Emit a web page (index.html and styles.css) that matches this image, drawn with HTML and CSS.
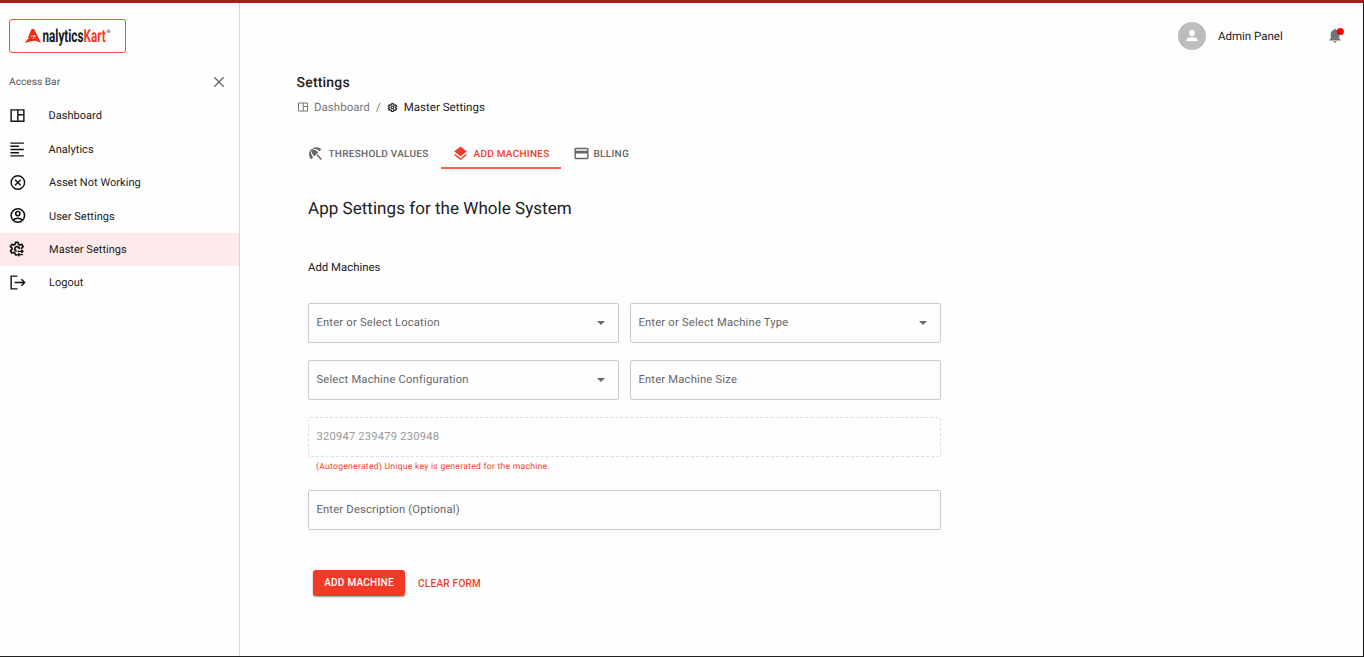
FILE: index.html
```html
<!DOCTYPE html>
<html lang="en">
<head>
<meta charset="utf-8">
<title>AnalyticsKart - Master Settings</title>
<link rel="stylesheet" href="styles.css">
</head>
<body>
<svg class="defs" aria-hidden="true">
  <symbol id="i-dash" viewBox="0 0 24 24"><path fill="none" stroke="currentColor" stroke-width="2" d="M3 4h18v16H3zM12.500 4v16M12.500 11H21"/></symbol>
  <symbol id="i-gear" viewBox="0 0 24 24"><path fill="none" stroke="currentColor" stroke-width="3" stroke-linejoin="round" d="M10 3.500h4l.6 2.500 2 1.100 2.400-.8 2 3.200-2 1.700v1.800l2 1.700-2 3.200-2.400-.8-2 1.100-.6 2.300h-4l-.6-2.300-2-1.100-2.400.8-2-3.200 2-1.700v-1.800l-2-1.700 2-3.200 2.400.8 2-1.100z"/><circle cx="12" cy="12" r="2.800" fill="none" stroke="currentColor" stroke-width="2.800"/></symbol>
</svg>
<div class="app">
  <aside class="sidebar">
    <div class="logo">
      <svg width="100" height="24" viewBox="0 0 100 24">
        <path fill="#f52a14" d="M7.500 5h2.700L17 19l-5-2.200-4 .2L1 19l2-3.600 2.300-.9-1.300-.9z"/>
        <path fill="none" stroke="#fff" stroke-width=".8" d="M6.500 12.500l4-1-1.500 3.500M10.500 11.500l1.200 1.800"/>
        <text class="logo-text" transform="translate(18.500 18) scale(.65 1)">nalytics<tspan class="logo-red">Kart</tspan></text>
        <text class="logo-mark" x="82.500" y="8.500">®</text>
      </svg>
    </div>
    <div class="access"><span>Access Bar</span>
      <svg width="12" height="12" viewBox="0 0 12 12"><path d="M1.300 1.300l9.400 9.400M10.700 1.300l-9.400 9.400" stroke="#666" stroke-width="1.300"/></svg>
    </div>
    <nav class="menu">
      <a class="item"><svg class="ico"><use href="#i-dash"/></svg><span class="t-dash">Dashboard</span></a>
      <a class="item"><svg class="ico" viewBox="0 0 24 24"><path stroke="currentColor" stroke-width="2" d="M2 3h19M2 7.500h12M2 12h19M2 16.500h12M2 21h19"/></svg><span class="t-dash">Analytics</span></a>
      <a class="item"><svg class="ico" viewBox="0 0 24 24"><g fill="none" stroke="currentColor" stroke-width="2"><circle cx="12.500" cy="12" r="9.500"/><path d="M8.500 8l8 8M16.500 8l-8 8"/></g></svg><span>Asset Not Working</span></a>
      <a class="item"><svg class="ico" viewBox="0 0 24 24"><g fill="none" stroke="currentColor" stroke-width="2.200"><circle cx="12.500" cy="12" r="9.500"/><circle cx="12.500" cy="9.300" r="3"/><path d="M6 18.500c3-3.500 10-3.500 13 0"/></g></svg><span>User Settings</span></a>
      <a class="item active"><svg class="ico ico-gear" viewBox="0 0 24 24"><path fill="none" stroke="currentColor" stroke-width="2.500" stroke-linejoin="round" d="M12 21l-2.500-.5-.4-2.300-2-1.100-2.900 1-2-3.500 2.300-2v-2l-2.300-2 2-3.500 2.900 1 2-1.100.6-3h4l.6 3 2 1.100 2.900-1 2 3.500-2.300 2v1.500"/><path fill="none" stroke="currentColor" stroke-width="2.500" d="M11.500 15.200a3.400 3.400 0 1 1 3.900-3"/><path fill="none" stroke="currentColor" stroke-width="2" d="M13 15.500h8M18.500 13l2.500 2.500-2.500 2.500M21 20.500h-8M15.500 18L13 20.500l2.500 2.500"/></svg><span>Master Settings</span></a>
      <a class="item"><svg class="ico" viewBox="0 0 24 24"><path fill="none" stroke="currentColor" stroke-width="2" d="M12 3H3v18h9M8 12h14M17.500 7.500L22 12l-4.500 4.500"/></svg><span>Logout</span></a>
    </nav>
  </aside>
  <main class="main">
    <header class="top">
      <svg class="avatar" viewBox="0 0 28 28"><circle cx="14" cy="14" r="14" fill="#bdbdbd"/><circle cx="14" cy="11" r="2.900" fill="#fff"/><path fill="#fff" d="M8.500 19.300v-1.200c0-2 3.600-3 5.500-3s5.500 1 5.500 3v1.200z"/></svg>
      <span class="admin">Admin Panel</span>
      <svg class="bell" width="18" height="18" viewBox="0 0 18 18"><path fill="#757575" d="M7 2.700a1 1 0 0 1 2 0c2.300.6 3.300 2.400 3.300 4.500v4.200l1.500 1.500v.7H2.200v-.7l1.500-1.500V7.200c0-2.100 1-3.900 3.300-4.500zM6.500 14.300h3a1.500 1.500 0 0 1-3 0z"/><circle cx="13.300" cy="4.500" r="3.600" fill="#f80404"/></svg>
    </header>
    <h1 class="title">Settings</h1>
    <div class="crumbs">
      <svg class="cr-dash"><use href="#i-dash"/></svg><span class="c-dash">Dashboard</span><span class="slash">/</span><svg class="cr-gear"><use href="#i-gear"/></svg><span class="c-cur">Master Settings</span>
    </div>
    <div class="tabs">
      <div class="tab tab-a"><svg width="17" height="17" viewBox="0 0 24 24"><path fill="currentColor" d="M13.127 14.560l1.430-1.430 6.440 6.443L19.570 21zm4.293-5.730l2.860-2.860c-3.950-3.950-10.350-3.960-14.300-.02 3.930-1.300 8.310-.25 11.440 2.880zM5.950 5.980c-3.940 3.950-3.930 10.350.02 14.300l2.860-2.860C5.700 14.290 4.650 9.910 5.950 5.980zm.02-.02l-.01.01c-.38 3.010 1.170 6.880 4.300 10.020l5.730-5.730c-3.130-3.130-7.010-4.680-10.020-4.300z"/></svg><span>THRESHOLD VALUES</span></div>
      <div class="tab tab-b"><svg width="17" height="17" viewBox="0 0 24 24"><path fill="currentColor" d="M11.990 18.540l-7.370-5.730L3 14.070l9 7 9-7-1.630-1.270zM12 16l7.360-5.730L21 9l-9-7-9 7 1.630 1.270z"/></svg><span>ADD MACHINES</span></div>
      <div class="tab tab-c"><svg width="17" height="17" viewBox="0 0 24 24"><path fill="currentColor" d="M20 4H4c-1.110 0-1.990.89-1.990 2L2 18c0 1.110.89 2 2 2h16c1.110 0 2-.89 2-2V6c0-1.110-.89-2-2-2zm0 14H4v-6h16v6zm0-10H4V6h16v2z"/></svg><span>BLLING</span></div>
    </div>
    <section class="panel">
      <h2 class="heading">App Settings for the Whole System</h2>
      <h3 class="sub">Add Machines</h3>
      <div class="form">
        <div class="field"><span>Enter or Select Location</span><i class="caret"></i></div>
        <div class="field"><span>Enter or Select Machine Type</span><i class="caret"></i></div>
        <div class="field"><span>Select Machine Configuration</span><i class="caret"></i></div>
        <div class="field"><span>Enter Machine Size</span></div>
        <div class="wide keyed">
          <div class="field disabled"><span>320947 239479 230948</span></div>
          <p class="hint">(Autogenerated) Unique key is generated for the machine.</p>
        </div>
        <div class="field wide"><span>Enter Description (Optional)</span></div>
      </div>
      <div class="actions"><button class="btn primary">ADD MACHINE</button><button class="btn text">CLEAR FORM</button></div>
    </section>
  </main>
</div>
</body>
</html>
```

FILE: styles.css
```css
* { box-sizing: border-box; }
body { margin: 0; font-family: Roboto, "Liberation Sans", sans-serif; color: #212121; background: #fefefe; text-rendering: geometricPrecision; }
h1, h2, h3, p { margin: 0; font-weight: 400; }
.defs { display: none; }
svg { display: block; flex: none; }
.app { display: flex; height: 657px; border-top: 3px solid #ab1a1a; border-right: 1px solid #111; border-bottom: 1px solid #222; overflow: hidden; }

.sidebar { width: 240px; flex: none; border-right: 1px solid #d6d6d6; padding-top: 16px; }
.logo { width: 117px; height: 34px; margin-left: 9px; border: 1px solid #f0513f; border-radius: 3px; display: flex; align-items: center; padding-left: 14px; }
.logo-text { font: 700 18px Roboto, sans-serif; fill: #161616; }
.logo-red { fill: #f53a25; }
.logo-mark { font: 5px Roboto, sans-serif; fill: #333; }
.access { display: flex; justify-content: space-between; align-items: center; height: 20px; margin-top: 18.500px; padding: 0 14px 0 9px; font-size: 10.200px; color: #555; }
.access span { padding-top: 2px; }
.menu { margin-top: 7.500px; }
.item { display: flex; align-items: center; height: 33.400px; padding-left: 9px; font-size: 11px; letter-spacing: .03px; }
.item span { margin-left: 23px; padding-top: .6px; }
.item .t-dash { margin-left: 22.500px; }
.ico { width: 17px; height: 17px; color: #111; overflow: visible; }
.active { background: #feeaea; }
.ico-gear { width: 16px; height: 16px; margin-right: 1px; }

.main { flex: 1; min-width: 0; padding-left: 56.500px; }
.top { height: 66px; display: flex; align-items: center; justify-content: flex-end; padding-right: 18px; }
.avatar { width: 28px; height: 28px; }
.admin { width: 109px; margin-left: 12px; padding-bottom: 1px; font-size: 11.500px; letter-spacing: 0; }
.title { height: 22px; line-height: 28px; font-size: 14px; font-weight: 500; letter-spacing: .2px; }
.crumbs { display: flex; align-items: center; height: 22px; margin-top: 5px; font-size: 11.500px; color: #777; }
.cr-dash { width: 12px; height: 12px; }
.c-dash { margin-left: 5.500px; letter-spacing: .03px; }
.slash { margin: 0 6px; }
.cr-gear { width: 11px; height: 11px; margin-right: 1px; color: #333; }
.c-cur { margin-left: 5px; color: #212121; letter-spacing: .03px; }
.tabs { display: flex; height: 31px; margin: 20px 0 0 -.5px; font-size: 10px; font-weight: 500; letter-spacing: .27px; color: #666; }
.tab { display: flex; align-items: center; gap: 4.500px; padding-left: 11px; white-space: nowrap; }
.tab span { padding-top: 1.500px; }
.tab-a { width: 145px; }
.tab-b { width: 120px; color: #f43b28; box-shadow: inset 0 -2px #f5604f; }
.tab-c { padding-left: 11.500px; gap: 4px; }

.panel { width: 633px; margin: 29px 0 0 11.500px; }
.heading { height: 22px; line-height: 22px; font-size: 17px; letter-spacing: .04px; }
.sub { height: 18px; line-height: 18px; margin-top: 38px; font-size: 11.400px; }
.form { display: grid; grid-template-columns: 311px 311px; gap: 17px 11px; margin-top: 27px; }
.field { height: 40px; border: 1px solid #cbcbcb; border-radius: 2px; display: flex; align-items: center; justify-content: space-between; padding: 0 13px 2px 7.400px; font-size: 11.200px; letter-spacing: .21px; color: #666; }
.wide { grid-column: 1 / -1; }
.keyed { height: 56px; }
.disabled { border: 1px dashed #dedede; color: #999; }
.hint { height: 16px; line-height: 20px; padding-left: 8px; font-size: 8.600px; letter-spacing: .26px; color: #f43b28; }
.caret { width: 0; height: 0; margin-top: 1px; border: 4px solid transparent; border-top-color: #666; border-bottom: 0; }
.actions { display: flex; margin: 39.500px 0 0 5px; }
.btn { height: 26px; border: 0; border-radius: 3px; padding: 0; font: 500 10px Roboto, sans-serif; letter-spacing: .27px; }
.primary { width: 92px; background: #f43a26; color: #fff; box-shadow: 0 1px 2px #0006; }
.text { margin-left: 13px; padding-top: 1px; background: none; color: #f43b28; }
```
